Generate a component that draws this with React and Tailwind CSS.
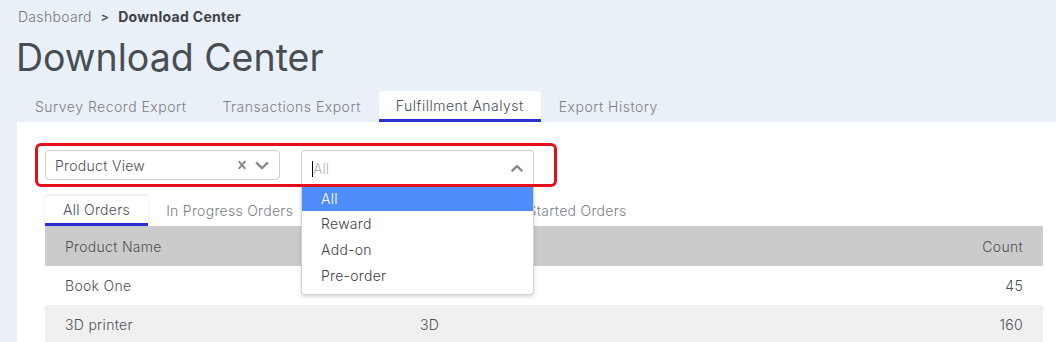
import React from "react";

const font = { fontFamily: "Inter, 'Open Sans', sans-serif" };

function ChevronDown({ className }) {
  return (
    <svg viewBox="0 0 20 20" className={className} fill="currentColor">
      <path d="M4.516 7.548c0.436-0.446 1.043-0.481 1.576 0l3.908 3.747 3.908-3.747c0.533-0.481 1.141-0.446 1.574 0 0.436 0.445 0.408 1.197 0 1.615-0.406 0.418-4.695 4.502-4.695 4.502-0.217 0.223-0.502 0.335-0.787 0.335s-0.57-0.112-0.789-0.335c0 0-4.287-4.084-4.695-4.502s-0.436-1.17 0-1.615z" />
    </svg>
  );
}
function ChevronUp({ className }) {
  return (
    <svg viewBox="0 0 20 20" className={className} fill="currentColor">
      <path d="M15.484 12.452c-0.436 0.446-1.043 0.481-1.576 0l-3.908-3.747-3.908 3.747c-0.533 0.481-1.141 0.446-1.574 0-0.436-0.445-0.408-1.197 0-1.615 0.406-0.418 4.695-4.502 4.695-4.502 0.217-0.223 0.502-0.335 0.787-0.335s0.57 0.112 0.789 0.335c0 0 4.287 4.084 4.695 4.502s0.436 1.17 0 1.615z" />
    </svg>
  );
}
function Cross({ className }) {
  return (
    <svg viewBox="0 0 20 20" className={className} fill="currentColor">
      <path d="M14.348 14.849c-0.469 0.469-1.229 0.469-1.697 0l-2.651-3.030-2.651 3.029c-0.469 0.469-1.229 0.469-1.697 0-0.469-0.469-0.469-1.229 0-1.697l2.758-3.15-2.759-3.152c-0.469-0.469-0.469-1.228 0-1.697s1.228-0.469 1.697 0l2.652 3.031 2.651-3.031c0.469-0.469 1.228-0.469 1.697 0s0.469 1.229 0 1.697l-2.758 3.152 2.758 3.150c0.469 0.469 0.469 1.229 0 1.698z" />
    </svg>
  );
}

export default function App() {
  const topTabs = ["Survey Record Export", "Transactions Export", "Fulfillment Analyst", "Export History"];
  const subTabs = ["All Orders", "In Progress Orders", "Completed Orders", "Not Started Orders"];
  return (
    <div style={font} className="w-[1056px] h-[342px] overflow-hidden bg-[#eaf0f7] flex flex-col">
      <div className="shrink-0 pl-[18px] mt-[7px] h-[20px] text-[14px] leading-[20px] tracking-[0.3px] text-[#72777c] flex items-center">
        <span className="font-light">Dashboard</span>
        <span className="mx-[9px] font-bold text-[#555] text-[12px]">&gt;</span>
        <span className="font-bold text-[#3e4247]">Download Center</span>
      </div>
      <div className="shrink-0 pl-[16px] mt-[10px] h-[42px] text-[37.5px] leading-[42px] text-[#484d53]">Download Center</div>
      <div className="shrink-0 flex pl-[17px] mt-[12px] h-[31px]">
        {topTabs.map((t, i) => (
          <div
            key={t}
            className={
              i === 2
                ? "px-[17px] h-[31px] bg-white rounded-t-[4px] border-b-[3px] border-[#2a2fd4] text-[14px] leading-[29px] tracking-[0.5px] text-[#4a4f55] font-light"
                : "px-[18px] h-[31px] text-[14px] leading-[31px] tracking-[0.5px] text-[#7c8186] font-light"
            }
          >
            {t}
          </div>
        ))}
      </div>
      <div className="shrink-0 ml-[17px] h-[220px] bg-white relative pl-[28px] pr-[13px] pt-[28px]">
        <div className="flex items-start h-[46px]">
          <div className="w-[235px] h-[30px] border border-[#cfcfcf] rounded-[4px] flex items-center pl-[9px] pr-[6px] text-[14px] tracking-[0.3px] text-[#4d5156] font-light">
            <span className="flex-1">Product View</span>
            <Cross className="w-[16px] h-[16px] text-[#8a8a8a]" />
            <ChevronDown className="w-[22px] h-[22px] text-[#8a8a8a] ml-[1px]" />
          </div>
          <div className="ml-[21px] w-[233px] relative">
            <div className="h-[36px] border border-[#cfcfcf] border-b-0 rounded-t-[4px] flex items-center pl-[10px] pr-[6px] text-[14px]">
              <span className="w-[1px] h-[16px] bg-black" />
              <span className="flex-1 text-[#b3b3b3] font-light">All</span>
              <ChevronUp className="w-[20px] h-[20px] text-[#8a8a8a]" />
            </div>
            <div className="absolute left-0 top-[36px] w-[233px] h-[109px] bg-white border border-[#d4d4d4] border-t-0 rounded-b-[4px] shadow-[0_2px_4px_rgba(0,0,0,0.15)] z-10 text-[14px] tracking-[0.3px] font-light text-[#3f4348]">
              <div className="h-[25px] bg-[#4f8dfc] text-white pl-[19px] leading-[25px]">All</div>
              <div className="h-[26px] pl-[19px] leading-[26px]">Reward</div>
              <div className="h-[26px] pl-[19px] leading-[26px]">Add-on</div>
              <div className="h-[26px] pl-[19px] leading-[26px]">Pre-order</div>
            </div>
          </div>
        </div>
        <div className="flex h-[30px]">
          {subTabs.map((t, i) => (
            <div
              key={t}
              className={
                i === 0
                  ? "px-[18px] h-[30px] bg-white rounded-t-[3px] shadow-[0_-1px_3px_rgba(0,0,0,0.12)] border-b-[3px] border-[#2a2fd4] text-[14px] leading-[28px] tracking-[0.3px] text-[#4a4f55] font-light"
                  : i === 2
                  ? "px-[23px] h-[30px] text-[14px] leading-[30px] tracking-[0.3px] text-[#7c8186] font-light"
                  : "px-[18px] h-[30px] text-[14px] leading-[30px] tracking-[0.3px] text-[#7c8186] font-light"
              }
            >
              {t}
            </div>
          ))}
        </div>
        <div className="text-[14px] tracking-[0.3px] font-light text-[#4d5156]">
          <div className="h-[40px] bg-[#cbcbcb] flex items-center px-[20px]">
            <span className="w-[355px]">Product Name</span>
            <span className="flex-1">Type</span>
            <span>Count</span>
          </div>
          <div className="h-[39px] bg-white flex items-center px-[20px]">
            <span className="w-[355px]">Book One</span>
            <span className="flex-1">Book</span>
            <span>45</span>
          </div>
          <div className="h-[39px] bg-[#f0f0f0] flex items-center px-[20px]">
            <span className="w-[355px]">3D printer</span>
            <span className="flex-1">3D</span>
            <span>160</span>
          </div>
        </div>
        <div className="absolute left-[18px] top-[21px] w-[522px] h-[44px] border-[3px] border-[#e3101b] rounded-[6px] z-20 pointer-events-none" />
      </div>
    </div>
  );
}
